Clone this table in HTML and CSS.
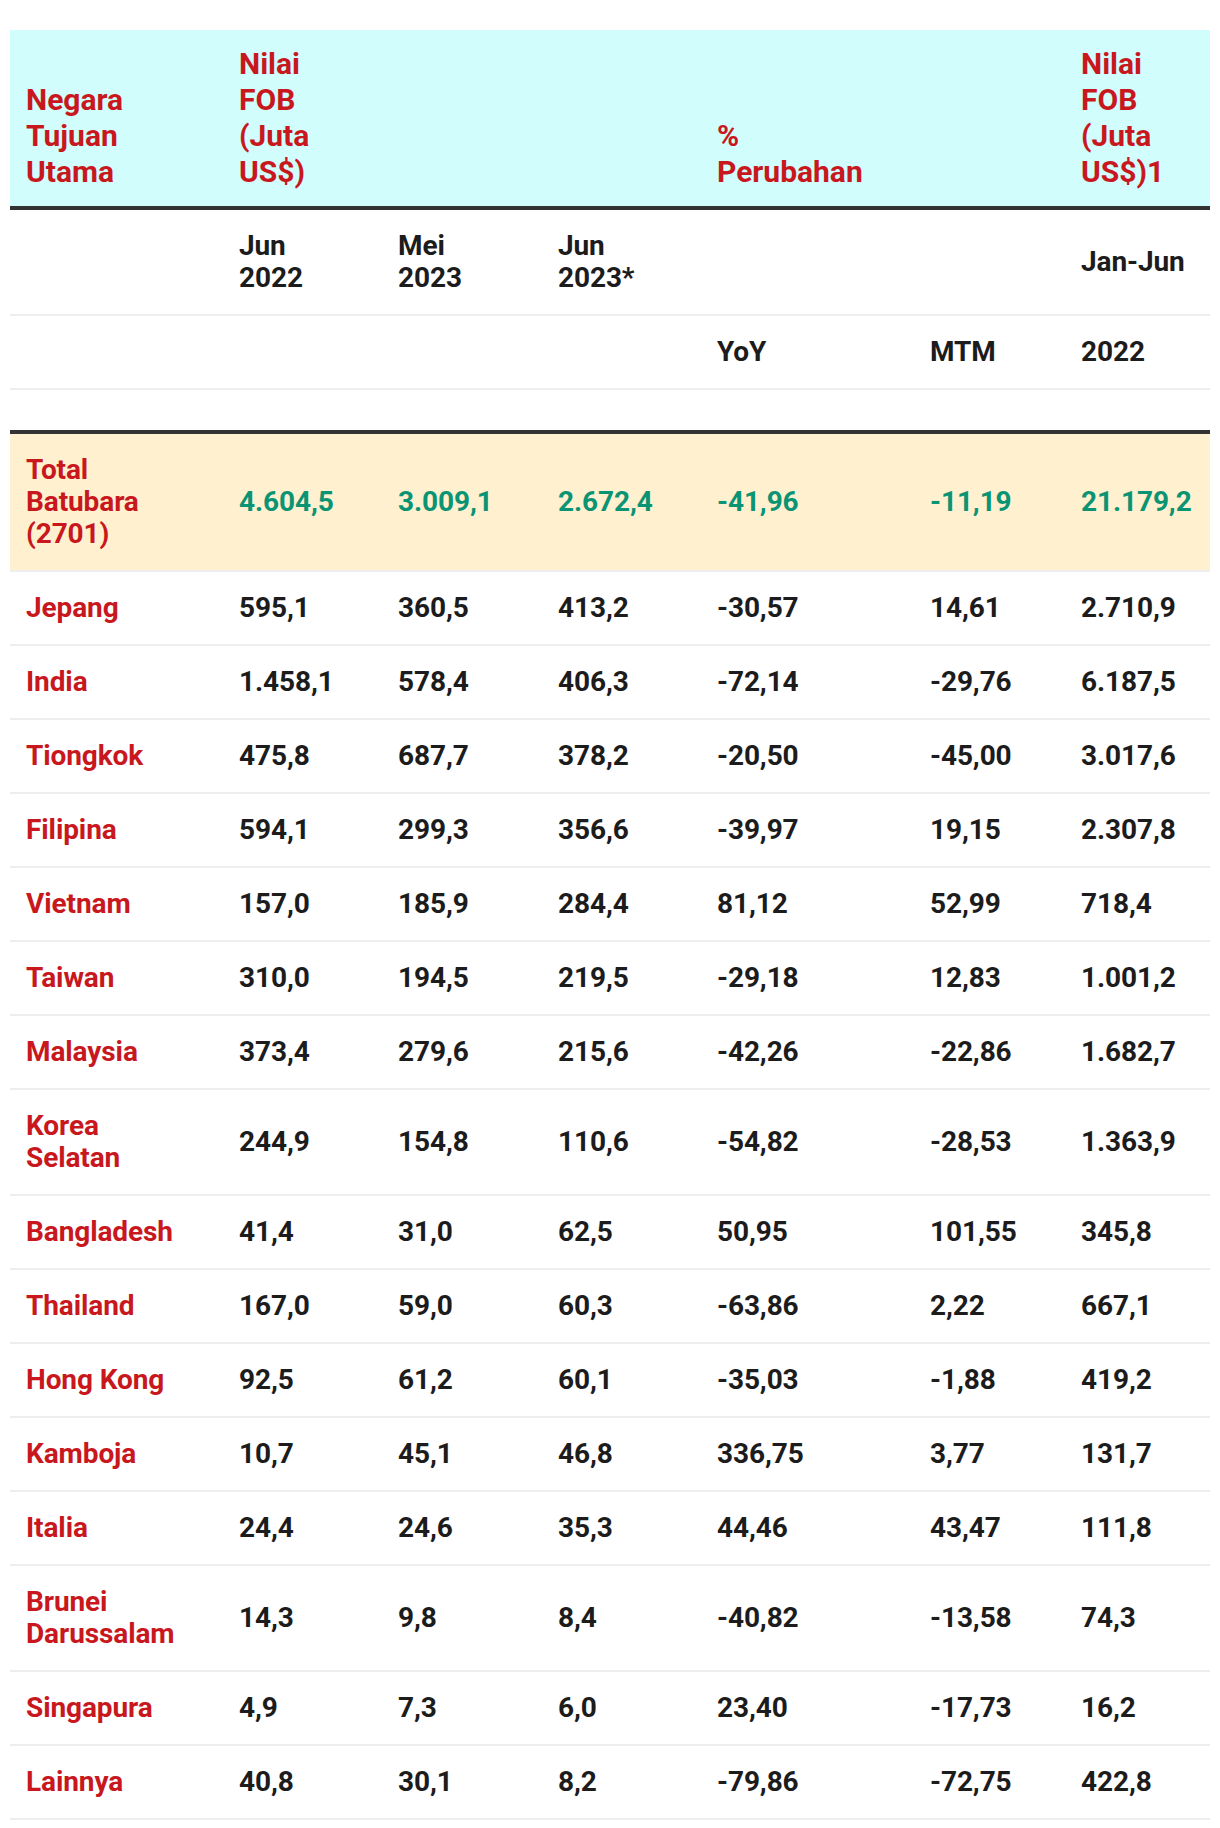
FILE: index.html
```html
<!DOCTYPE html>
<html lang="id">
<head>
<meta charset="utf-8">
<title>Ekspor Batubara</title>
<link rel="stylesheet" href="styles.css">
</head>
<body>
<div class="wrap">
<table class="tbl">
  <colgroup>
    <col class="c1"><col class="c2"><col class="c3"><col class="c4"><col class="c5"><col class="c6"><col class="c7">
  </colgroup>
  <thead>
    <tr class="head">
      <th>Negara<br>Tujuan<br>Utama</th>
      <th>Nilai<br>FOB<br>(Juta<br>US$)</th>
      <th></th>
      <th></th>
      <th>%<br>Perubahan</th>
      <th></th>
      <th>Nilai<br>FOB<br>(Juta<br>US$)1</th>
    </tr>
  </thead>
  <tbody>
    <tr class="sub">
      <td></td><td>Jun<br>2022</td><td>Mei<br>2023</td><td>Jun<br>2023*</td><td></td><td></td><td>Jan-Jun</td>
    </tr>
    <tr class="sub">
      <td></td><td></td><td></td><td></td><td>YoY</td><td>MTM</td><td>2022</td>
    </tr>
    <tr class="spacer">
      <td></td><td></td><td></td><td></td><td></td><td></td><td></td>
    </tr>
    <tr class="total">
      <td class="name">Total<br>Batubara<br>(2701)</td><td>4.604,5</td><td>3.009,1</td><td>2.672,4</td><td>-41,96</td><td>-11,19</td><td>21.179,2</td>
    </tr>
    <tr><td class="name">Jepang</td><td>595,1</td><td>360,5</td><td>413,2</td><td>-30,57</td><td>14,61</td><td>2.710,9</td></tr>
    <tr><td class="name">India</td><td>1.458,1</td><td>578,4</td><td>406,3</td><td>-72,14</td><td>-29,76</td><td>6.187,5</td></tr>
    <tr><td class="name">Tiongkok</td><td>475,8</td><td>687,7</td><td>378,2</td><td>-20,50</td><td>-45,00</td><td>3.017,6</td></tr>
    <tr><td class="name">Filipina</td><td>594,1</td><td>299,3</td><td>356,6</td><td>-39,97</td><td>19,15</td><td>2.307,8</td></tr>
    <tr><td class="name">Vietnam</td><td>157,0</td><td>185,9</td><td>284,4</td><td>81,12</td><td>52,99</td><td>718,4</td></tr>
    <tr><td class="name">Taiwan</td><td>310,0</td><td>194,5</td><td>219,5</td><td>-29,18</td><td>12,83</td><td>1.001,2</td></tr>
    <tr><td class="name">Malaysia</td><td>373,4</td><td>279,6</td><td>215,6</td><td>-42,26</td><td>-22,86</td><td>1.682,7</td></tr>
    <tr><td class="name">Korea<br>Selatan</td><td>244,9</td><td>154,8</td><td>110,6</td><td>-54,82</td><td>-28,53</td><td>1.363,9</td></tr>
    <tr><td class="name">Bangladesh</td><td>41,4</td><td>31,0</td><td>62,5</td><td>50,95</td><td>101,55</td><td>345,8</td></tr>
    <tr><td class="name">Thailand</td><td>167,0</td><td>59,0</td><td>60,3</td><td>-63,86</td><td>2,22</td><td>667,1</td></tr>
    <tr><td class="name">Hong Kong</td><td>92,5</td><td>61,2</td><td>60,1</td><td>-35,03</td><td>-1,88</td><td>419,2</td></tr>
    <tr><td class="name">Kamboja</td><td>10,7</td><td>45,1</td><td>46,8</td><td>336,75</td><td>3,77</td><td>131,7</td></tr>
    <tr><td class="name">Italia</td><td>24,4</td><td>24,6</td><td>35,3</td><td>44,46</td><td>43,47</td><td>111,8</td></tr>
    <tr><td class="name">Brunei<br>Darussalam</td><td>14,3</td><td>9,8</td><td>8,4</td><td>-40,82</td><td>-13,58</td><td>74,3</td></tr>
    <tr><td class="name">Singapura</td><td>4,9</td><td>7,3</td><td>6,0</td><td>23,40</td><td>-17,73</td><td>16,2</td></tr>
    <tr><td class="name">Lainnya</td><td>40,8</td><td>30,1</td><td>8,2</td><td>-79,86</td><td>-72,75</td><td>422,8</td></tr>
  </tbody>
</table>
</div>
</body>
</html>
```

FILE: styles.css
```css
html, body {
  margin: 0;
  padding: 0;
  background: #ffffff;
}

body {
  font-family: Roboto, "Liberation Sans", Arial, sans-serif;
  font-weight: 700;
}

.wrap {
  padding: 30px 10px 8px 10px;
}

.tbl {
  width: 1200px;
  table-layout: fixed;
  border-collapse: separate;
  border-spacing: 0;
}

.c1 { width: 213px; }
.c2 { width: 159px; }
.c3 { width: 160px; }
.c4 { width: 159px; }
.c5 { width: 213px; }
.c6 { width: 151px; }
.c7 { width: 145px; }

.head th {
  background: #d1fdfd;
  color: #c8181e;
  font-size: 30px;
  line-height: 36px;
  font-weight: 700;
  text-align: left;
  vertical-align: bottom;
  padding: 16px 16px;
  border-bottom: 4px solid #333333;
}

.tbl td {
  font-size: 28px;
  line-height: 32px;
  color: #1c1c1c;
  text-align: left;
  vertical-align: middle;
  padding: 20px 16px;
  border-bottom: 2px solid #eeeeee;
  letter-spacing: -0.1px;
}

.tbl tr.sub td {
  vertical-align: middle;
}

.tbl tr.spacer td {
  border-bottom: 4px solid #333333;
}

.tbl td.name {
  color: #c8181e;
}

.tbl tr.total td {
  background: #fff0cf;
  color: #0b9474;
}

.tbl tr.total td.name {
  color: #c8181e;
}
```
